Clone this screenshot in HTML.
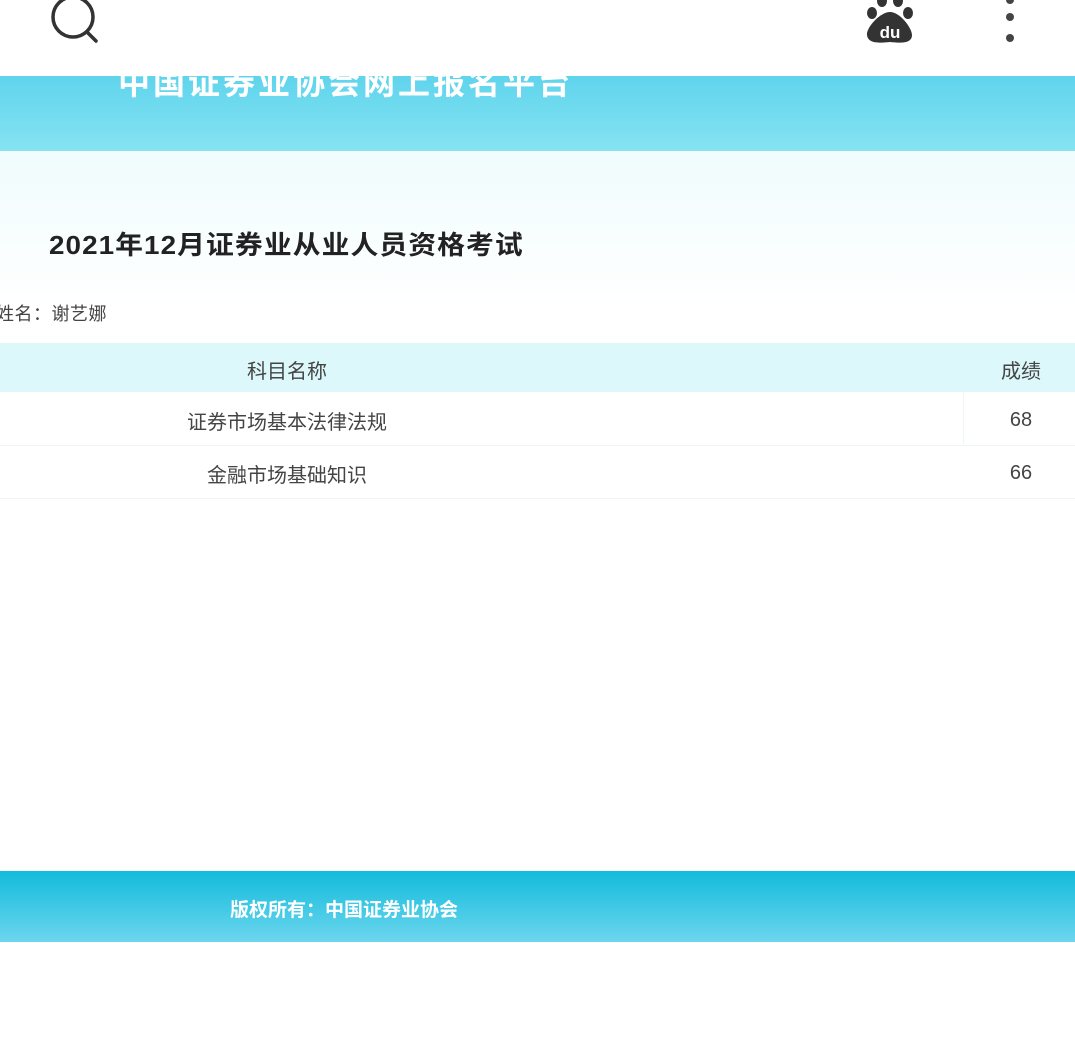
<!DOCTYPE html>
<html><head><meta charset="utf-8"><style>
body{margin:0;width:1075px;height:1045px;background:#fff;position:relative;overflow:hidden;font-family:"Liberation Sans","Noto Sans CJK SC",sans-serif;}
.top{position:absolute;left:0;top:0;width:1075px;height:76px;background:#fff;}
.banner{position:absolute;left:0;top:76px;width:1075px;height:75px;background:linear-gradient(#5fd4ec,#86e3f2);}
.bt{position:absolute;left:118px;top:58px;font-size:32px;font-weight:bold;color:#fff;letter-spacing:3px;}
.content{position:absolute;left:0;top:151px;width:1075px;height:160px;background:linear-gradient(#f0fcfd,#fff);}
.title{position:absolute;left:49px;top:225px;font-size:26px;font-weight:bold;color:#222;letter-spacing:1px;transform:scaleX(1.07);transform-origin:left;}
.name{position:absolute;left:-4px;top:300px;font-size:18px;color:#444;letter-spacing:0.5px;}
.th{position:absolute;left:0;top:343px;width:1075px;height:49px;background:#dcf8fa;}
.t{position:absolute;font-size:20px;color:#444;transform:translateX(-50%);white-space:nowrap;}
.n{top:3px;position:relative}
.line{position:absolute;left:0;width:1075px;height:1px;background:#eef6f7;}
.foot{position:absolute;left:0;top:871px;width:1075px;height:71px;background:linear-gradient(#12bbdc,#6cd6ee);}
.ft{position:absolute;left:230px;top:895px;font-size:19px;font-weight:bold;color:#fff;}
</style></head><body>
<div class="banner"></div>
<div class="top"></div>
<div class="bt" style="clip-path:inset(18px 0 0 0)">中国证券业协会网上报名平台</div>
<svg style="position:absolute;left:50px;top:0" width="50" height="44"><circle cx="23" cy="17" r="20" fill="none" stroke="#333" stroke-width="3.5"/><line x1="37" y1="32" x2="46" y2="41" stroke="#333" stroke-width="3.5" stroke-linecap="round"/></svg>
<svg style="position:absolute;left:862px;top:0" width="54" height="46"><ellipse cx="10" cy="13" rx="5" ry="6" fill="#333"/><ellipse cx="46" cy="13" rx="5" ry="6" fill="#333"/><ellipse cx="20" cy="1" rx="5" ry="6" fill="#333"/><ellipse cx="36" cy="1" rx="5" ry="6" fill="#333"/><path d="M28 12 C18 12 4 28 5 35 C6 44 18 43 28 42 C38 43 50 44 50 35 C50 28 38 12 28 12Z" fill="#333"/><text x="28" y="38" font-size="17" font-weight="bold" fill="#fff" text-anchor="middle" font-family="Liberation Sans">du</text></svg>
<div style="position:absolute;left:1006px;top:-4px;width:8px;height:8px;border-radius:4px;background:#444"></div>
<div style="position:absolute;left:1006px;top:13px;width:8px;height:8px;border-radius:4px;background:#444"></div>
<div style="position:absolute;left:1006px;top:34px;width:8px;height:8px;border-radius:4px;background:#444"></div>
<div class="content"></div>
<div class="title">2021年12月证券业从业人员资格考试</div>
<div class="name">姓名：谢艺娜</div>
<div class="th"></div>
<div class="t" style="left:287px;top:355px">科目名称</div>
<div class="t" style="left:1021px;top:355px">成绩</div>
<div class="t" style="left:287px;top:406px">证券市场基本法律法规</div>
<div class="t" style="left:1021px;top:406px"><span class="n">68</span></div>
<div class="line" style="top:445px"></div>
<div class="t" style="left:287px;top:459px">金融市场基础知识</div>
<div class="t" style="left:1021px;top:459px"><span class="n">66</span></div>
<div class="line" style="top:498px"></div>
<div style="position:absolute;left:963px;top:392px;width:1px;height:53px;background:#eef6f7"></div>
<div class="foot"></div>
<div class="ft">版权所有：中国证券业协会</div>
</body></html>
